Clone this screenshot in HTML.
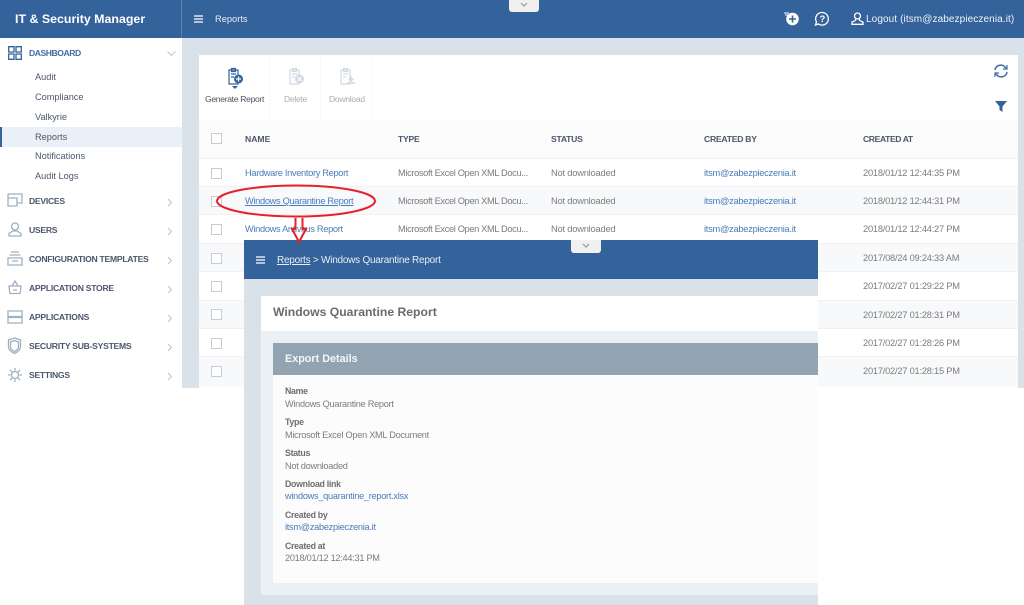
<!DOCTYPE html>
<html><head><meta charset="utf-8">
<style>
html,body{margin:0;padding:0;background:#fff;width:1024px;height:605px;overflow:hidden}
body{position:relative;font-family:"Liberation Sans",sans-serif;font-size:9.3px;color:#7c7c7c}
div,span.a,svg{position:absolute}
.t{position:absolute;white-space:nowrap;line-height:12px}
.nav{font-weight:bold;font-size:8.6px;color:#4d566e;left:29px;letter-spacing:-.27px}
.sub{font-size:9.2px;color:#4d566e;left:35px}
.hd{font-weight:bold;font-size:8.6px;color:#4d566e;top:133px;letter-spacing:-.25px}
.lnk{color:#4a7cbc}
.cb{position:absolute;left:211px;width:9px;height:9px;border:1px solid #c6ccd2;background:#fff}
.lb{left:285px;font-weight:bold;color:#6e6e6e;font-size:8.8px;letter-spacing:-.3px}
.vl{left:285px;color:#7c7c7c;font-size:9.2px;letter-spacing:-.27px}
.ic{fill:none;stroke:#9fb0c0;stroke-width:1.3}
.row{position:absolute;left:199px;width:819px;border-bottom:1px solid #eff1f3}
.n{letter-spacing:-.34px}.m{letter-spacing:-.37px}.s{letter-spacing:-.2px}.e{letter-spacing:-.27px}.d{letter-spacing:-.23px}
</style></head>
<body>
<div style="left:0;top:38px;width:1024px;height:350px;background:#dae2e9"></div>
<div style="left:0;top:0;width:1024px;height:38px;background:#34629a"></div>
<div style="left:181px;top:0;width:1px;height:38px;background:#5c82b0"></div>
<div class="t" style="left:15px;top:12px;color:#fff;font-weight:bold;font-size:12.4px;line-height:15px">IT &amp; Security Manager</div>
<svg style="left:194px;top:15px" width="10" height="8"><path d="M0 1h9M0 4h9M0 7h9" stroke="#fff" stroke-width="1.3"/></svg>
<div class="t" style="left:215px;top:13px;color:#e8eef5;font-size:9.3px">Reports</div>
<div style="left:509px;top:0;width:30px;height:12px;background:#f0f0f0;border-radius:0 0 3px 3px"></div>
<svg style="left:520px;top:2px" width="8" height="6"><path d="M1 1l3 3 3-3" stroke="#999" fill="none" stroke-width="1.2"/></svg>
<svg style="left:783px;top:11px" width="18" height="16"><path d="M1 2h5M2 4h3" stroke="#fff"/><circle cx="9.500" cy="8" r="6.300" fill="#fff"/><path d="M6 8h7M9.500 4.500v7" stroke="#34629a" stroke-width="1.600"/></svg>
<svg style="left:814px;top:11px" width="16" height="16"><path d="M8 1.500a6.300 6.300 0 1 1-3.500 11.500l-3 1 1-3A6.300 6.300 0 0 1 8 1.500z" fill="none" stroke="#fff" stroke-width="1.300"/><text x="5.500" y="11" fill="#fff" font-size="9.500" font-weight="bold" font-family="Liberation Sans">?</text></svg>
<svg style="left:851px;top:12px" width="13" height="13"><circle cx="6.500" cy="4" r="3" fill="none" stroke="#fff" stroke-width="1.300"/><path d="M4.500 7v1.500L1 10v2.300h11V10L8.500 8.500V7" fill="none" stroke="#fff" stroke-width="1.300"/></svg>
<div class="t" style="left:866px;top:14px;color:#f0f4f8;font-size:10px;letter-spacing:.1px">Logout (itsm@zabezpieczenia.it)</div>

<!-- sidebar -->
<div style="left:0;top:38px;width:182px;height:350px;background:#fff"></div>
<div style="left:0;top:127px;width:182px;height:20px;background:#eaf0f7"></div>
<div style="left:0;top:127px;width:2px;height:20px;background:#34629a"></div>
<svg style="left:8px;top:46px" width="14" height="14"><path d="M.7.700h5.300v5.300H.7zM8 .7h5.300v5.300H8zM.7 8h5.300v5.300H.7zM8 8h5.300v5.300H8z" fill="none" stroke="#34629a" stroke-width="1.300"/></svg>
<div class="t nav" style="top:47px;color:#3f6da5;letter-spacing:-.45px">DASHBOARD</div>
<svg style="left:167px;top:51px" width="9" height="6"><path d="M.5.500l4 4 4-4" fill="none" stroke="#bcc4cc"/></svg>
<div class="t sub" style="top:71px">Audit</div>
<div class="t sub" style="top:91px">Compliance</div>
<div class="t sub" style="top:111px">Valkyrie</div>
<div class="t sub" style="top:131px">Reports</div>
<div class="t sub" style="top:150px">Notifications</div>
<div class="t sub" style="top:170px">Audit Logs</div>

<svg style="left:7px;top:193px" width="16" height="15"><path class="ic" d="M1 1h14v9h-5M1 1v12h9V5H1"/></svg>
<div class="t nav" style="top:195px">DEVICES</div>
<svg style="left:8px;top:222px" width="14" height="15"><circle class="ic" cx="7" cy="4.500" r="3.500"/><path class="ic" d="M1 14v-2.500L5 9h4l4 2.500V14z"/></svg>
<div class="t nav" style="top:224px">USERS</div>
<svg style="left:7px;top:251px" width="16" height="15"><path class="ic" d="M4 1h8M2.500 4h11M1 7h14v7H1zM5 10h6"/></svg>
<div class="t nav" style="top:253px">CONFIGURATION TEMPLATES</div>
<svg style="left:8px;top:280px" width="14" height="15"><path class="ic" d="M1 6h12v1.500l-1 6H2l-1-6zM4 6l3-5 3 5M5 10h4"/></svg>
<div class="t nav" style="top:282px">APPLICATION STORE</div>
<svg style="left:7px;top:310px" width="16" height="14"><path class="ic" d="M1 1h14v5.500H1zM1 7.500h14V13H1z"/></svg>
<div class="t nav" style="top:311px">APPLICATIONS</div>
<svg style="left:7px;top:337px" width="15" height="18"><path class="ic" d="M7.500 1l6 2v7c0 3-3 5-6 6.500C4.500 15 1.500 13 1.500 10V3z"/><path class="ic" d="M7.500 3.500l4 1.500v5c0 2-2 3.500-4 4.500-2-1-4-2.500-4-4.500V5z"/></svg>
<div class="t nav" style="top:340px">SECURITY SUB-SYSTEMS</div>
<svg style="left:8px;top:368px" width="14" height="14"><circle class="ic" cx="7" cy="7" r="3.500"/><path class="ic" d="M7 0v2.500M7 11.500V14M0 7h2.500M11.500 7H14M2 2l2 2M10 10l2 2M12 2l-2 2M4 10l-2 2"/></svg>
<div class="t nav" style="top:369px">SETTINGS</div>
<svg style="left:167px;top:197px" width="6" height="190" fill="none" stroke="#bcc4cc"><path d="M1 2l3.500 3.500L1 9M1 31l3.500 3.500L1 38M1 60l3.500 3.500L1 67M1 89l3.500 3.500L1 96M1 118l3.500 3.500L1 125M1 147l3.500 3.500L1 154M1 176l3.500 3.500L1 183"/></svg>

<!-- main panel -->
<div style="left:199px;top:55px;width:819px;height:333px;background:#fff"></div>
<div style="left:199px;top:120px;width:819px;height:38px;background:#fbfbfb;border-bottom:1px solid #eee"></div>
<div style="left:269px;top:55px;width:1px;height:65px;background:#f8f8f8"></div>
<div style="left:320px;top:55px;width:1px;height:65px;background:#f8f8f8"></div>
<div style="left:371px;top:55px;width:1px;height:65px;background:#f8f8f8"></div>
<svg style="left:227px;top:66px" width="18" height="20"><path d="M2 4h9v14H2zM4.500 2.500h4v3h-4zM4 8h5M4 11h3" fill="none" stroke="#34629a" stroke-width="1.200"/><circle cx="11.500" cy="13" r="4.500" fill="#34629a"/><path d="M9 13h5M11.500 10.500v5" stroke="#fff" stroke-width="1.200"/></svg>
<svg style="left:232px;top:86px" width="6" height="4"><path d="M0 0h6L3 3z" fill="#34629a"/></svg>
<svg style="left:288px;top:66px" width="18" height="20"><path d="M2 4h9v14H2zM4.500 2.500h4v3h-4zM4 8h5M4 11h3" fill="none" stroke="#d3d9e2" stroke-width="1.200"/><circle cx="11.500" cy="13" r="4.500" fill="#d3d9e2"/><path d="M9.500 11l4 4M13.500 11l-4 4" stroke="#fff"/></svg>
<svg style="left:339px;top:66px" width="18" height="20"><path d="M2 4h9v14H2zM4.500 2.500h4v3h-4zM4 8h5M4 11h3" fill="none" stroke="#d3d9e2" stroke-width="1.200"/><path d="M12 10v4M9.500 12.500l2.500 2.500 2.500-2.500M8 17h8" fill="none" stroke="#d3d9e2" stroke-width="1.500"/></svg>
<div class="t" style="left:205px;top:93px;font-size:8.6px;color:#4d5560;letter-spacing:-.33px">Generate Report</div>
<div class="t" style="left:284px;top:93px;font-size:8.6px;color:#a9adb3;letter-spacing:-.3px">Delete</div>
<div class="t" style="left:329px;top:93px;font-size:8.6px;color:#a9adb3;letter-spacing:-.3px">Download</div>
<svg style="left:993px;top:63px" width="16" height="16" fill="none" stroke="#3f6da5" stroke-width="1.500"><path d="M2 7a5.800 5.800 0 0 1 10-3l1.500 1.500M14 9a5.800 5.800 0 0 1-10 3l-1.500-1.500"/><path d="M14 2v4h-4M2 14v-4h4" stroke-width="1.200"/></svg>
<svg style="left:995px;top:100px" width="12" height="13"><path d="M0 1h12L7.500 6.500V12L4.500 10V6.500z" fill="#34629a"/></svg>

<div class="row" style="top:159px;height:27px;background:#fff"></div>
<div class="row" style="top:187px;height:27px;background:#f8f9fb"></div>
<div class="row" style="top:215px;height:28px;background:#fff"></div>
<div class="row" style="top:244px;height:27px;background:#f8f9fb"></div>
<div class="row" style="top:272px;height:28px;background:#fff"></div>
<div class="row" style="top:301px;height:27px;background:#f8f9fb"></div>
<div class="row" style="top:329px;height:27px;background:#fff"></div>
<div class="row" style="top:357px;height:30px;background:#f8f9fb;border:0"></div>

<span class="cb" style="top:133px"></span>
<span class="cb" style="top:168px"></span>
<span class="cb" style="top:196px"></span>
<span class="cb" style="top:224px"></span>
<span class="cb" style="top:253px"></span>
<span class="cb" style="top:281px"></span>
<span class="cb" style="top:309px"></span>
<span class="cb" style="top:338px"></span>
<span class="cb" style="top:366px"></span>

<div class="t hd" style="left:245px;letter-spacing:0">NAME</div>
<div class="t hd" style="left:398px">TYPE</div>
<div class="t hd" style="left:551px">STATUS</div>
<div class="t hd" style="left:704px">CREATED BY</div>
<div class="t hd" style="left:863px;letter-spacing:-.4px">CREATED AT</div>

<div class="t lnk n" style="left:245px;top:167px">Hardware Inventory Report</div>
<div class="t lnk n" style="left:245px;top:195px;text-decoration:underline">Windows Quarantine Report</div>
<div class="t lnk n" style="left:245px;top:223px">Windows Antivirus Report</div>
<div class="t m" style="left:398px;top:167px">Microsoft Excel Open XML Docu...</div>
<div class="t m" style="left:398px;top:195px">Microsoft Excel Open XML Docu...</div>
<div class="t m" style="left:398px;top:223px">Microsoft Excel Open XML Docu...</div>
<div class="t s" style="left:551px;top:167px">Not downloaded</div>
<div class="t s" style="left:551px;top:195px">Not downloaded</div>
<div class="t s" style="left:551px;top:223px">Not downloaded</div>
<div class="t lnk e" style="left:704px;top:167px">itsm@zabezpieczenia.it</div>
<div class="t lnk e" style="left:704px;top:195px">itsm@zabezpieczenia.it</div>
<div class="t lnk e" style="left:704px;top:223px">itsm@zabezpieczenia.it</div>
<div class="t d" style="left:863px;top:167px">2018/01/12 12:44:35 PM</div>
<div class="t d" style="left:863px;top:195px">2018/01/12 12:44:31 PM</div>
<div class="t d" style="left:863px;top:223px">2018/01/12 12:44:27 PM</div>
<div class="t d" style="left:863px;top:252px">2017/08/24 09:24:33 AM</div>
<div class="t d" style="left:863px;top:280px">2017/02/27 01:29:22 PM</div>
<div class="t d" style="left:863px;top:309px">2017/02/27 01:28:31 PM</div>
<div class="t d" style="left:863px;top:337px">2017/02/27 01:28:26 PM</div>
<div class="t d" style="left:863px;top:365px">2017/02/27 01:28:15 PM</div>

<!-- overlay -->
<div style="left:244px;top:240px;width:574px;height:365px;background:#dae2e9"></div>
<div style="left:244px;top:240px;width:574px;height:39px;background:#34629a"></div>
<div style="left:571px;top:240px;width:30px;height:13px;background:#f0f0f0;border-radius:0 0 3px 3px"></div>
<svg style="left:582px;top:243px" width="8" height="6"><path d="M1 1l3 3 3-3" stroke="#999" fill="none" stroke-width="1.200"/></svg>
<svg style="left:256px;top:256px" width="10" height="8"><path d="M0 1h9M0 4h9M0 7h9" stroke="#fff" stroke-width="1.300"/></svg>
<div class="t" style="left:277px;top:255px;color:#e8eef5;font-size:10px;letter-spacing:-.24px"><span style="text-decoration:underline">Reports</span> &gt; Windows Quarantine Report</div>
<div style="left:261px;top:296px;width:557px;height:299px;background:#ebf0f4"></div>
<div style="left:261px;top:296px;width:557px;height:35px;background:#fff"></div>
<div class="t" style="left:273px;top:305px;font-size:12.2px;line-height:15px;font-weight:bold;color:#6b6b6b">Windows Quarantine Report</div>
<div style="left:273px;top:343px;width:545px;height:32px;background:#92a3b1"></div>
<div class="t" style="left:285px;top:352px;font-size:10.8px;line-height:14px;font-weight:bold;color:#f4f6f8">Export Details</div>
<div style="left:273px;top:375px;width:545px;height:208px;background:#fcfcfc"></div>
<div class="t lb" style="top:385px">Name</div>
<div class="t vl" style="top:398px">Windows Quarantine Report</div>
<div class="t lb" style="top:416px">Type</div>
<div class="t vl" style="top:429px">Microsoft Excel Open XML Document</div>
<div class="t lb" style="top:447px">Status</div>
<div class="t vl" style="top:460px">Not downloaded</div>
<div class="t lb" style="top:478px">Download link</div>
<div class="t vl" style="top:490px;color:#4a7cbc">windows_quarantine_report.xlsx</div>
<div class="t lb" style="top:509px">Created by</div>
<div class="t vl" style="top:521px;color:#4a7cbc">itsm@zabezpieczenia.it</div>
<div class="t lb" style="top:540px">Created at</div>
<div class="t vl" style="top:552px">2018/01/12 12:44:31 PM</div>

<!-- annotation -->
<svg style="left:0;top:0" width="1024" height="605" fill="none" stroke="#e8202a" stroke-width="2">
<ellipse cx="296" cy="201" rx="79" ry="15.500"/>
<path d="M295.500 218v11h-3.500l7 13 7-13h-3.500v-11"/>
</svg>
</body></html>
